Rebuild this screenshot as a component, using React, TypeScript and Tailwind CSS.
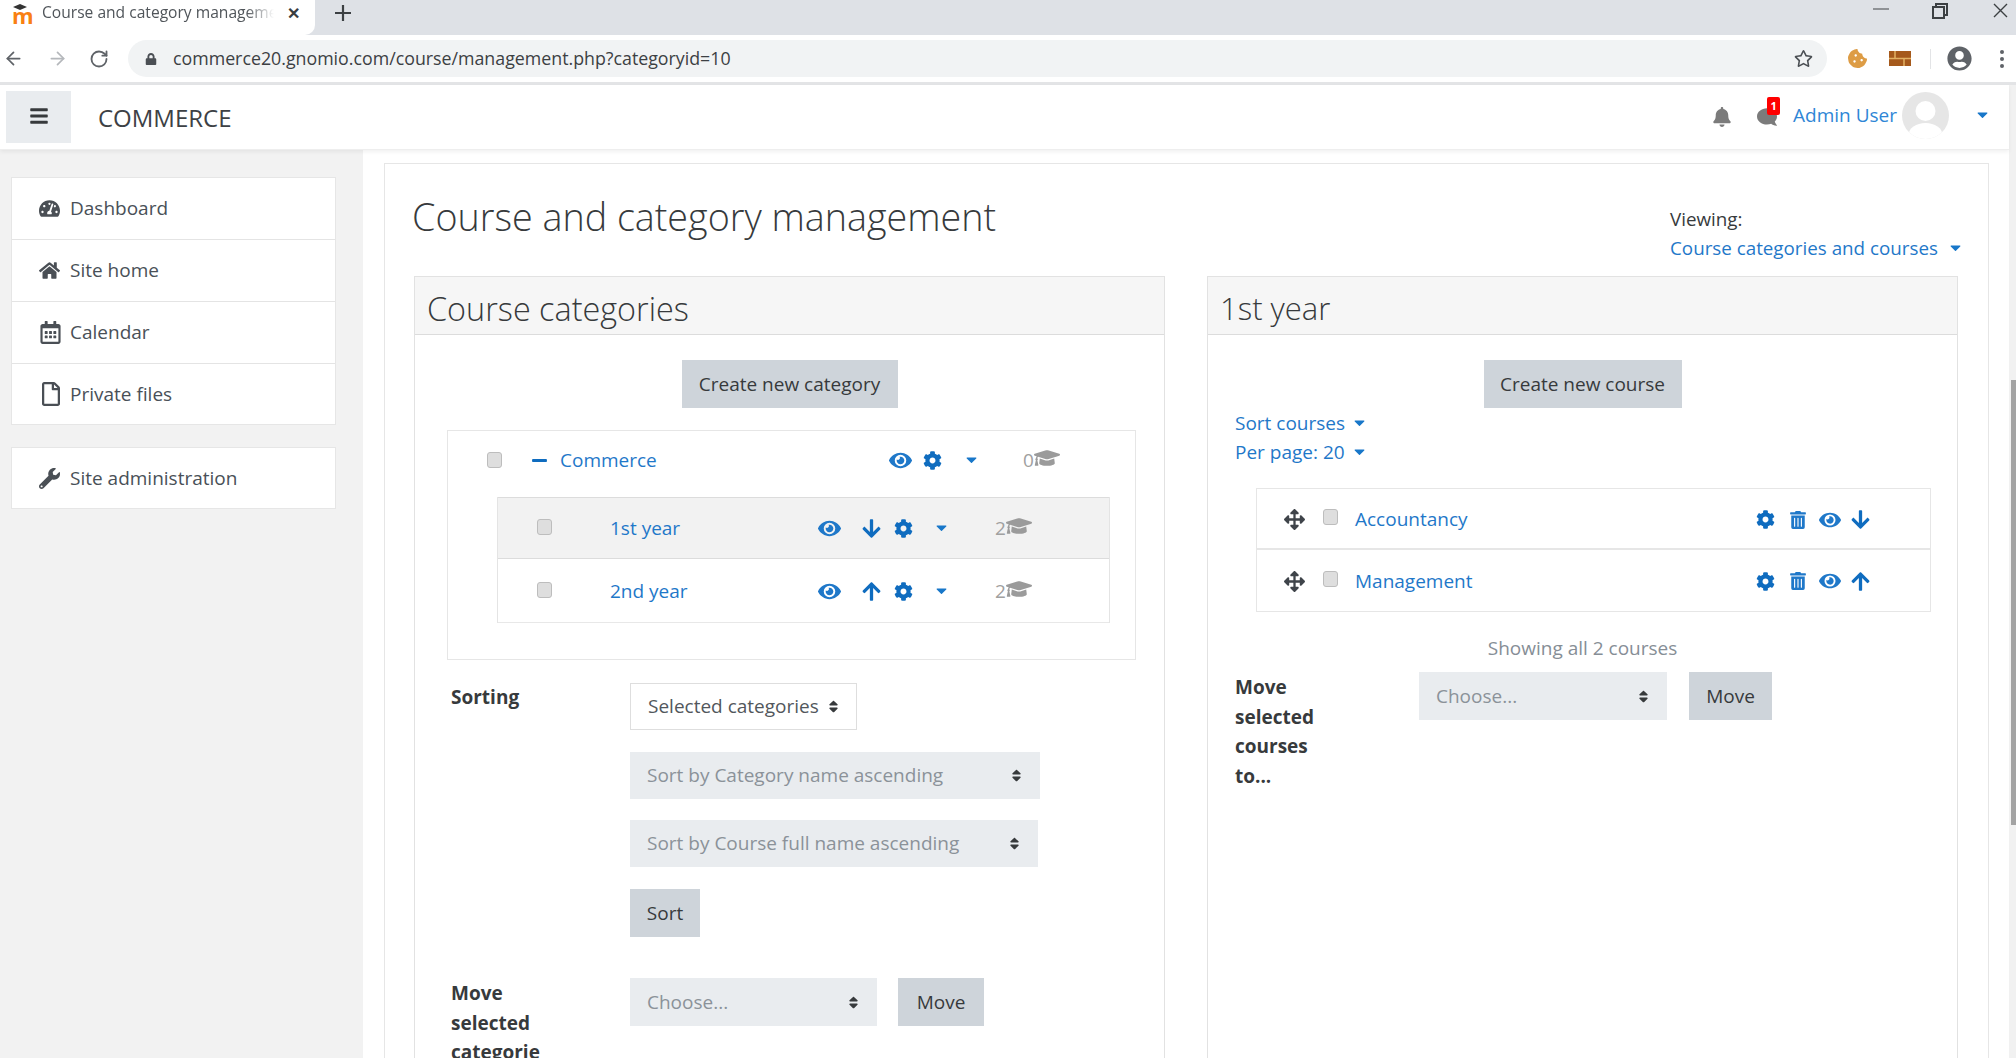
import React from "react";
import {
  FaArrowDown, FaArrowUp, FaArrowsAlt, FaBars, FaBell, FaRegCalendarAlt, FaCaretDown, FaCog,
  FaComment, FaEye, FaGraduationCap, FaHome, FaLock, FaMinus, FaRegFile, FaRegStar, FaSort, FaTachometerAlt,
  FaTrashAlt, FaUserCircle, FaWrench, FaCookieBite,
} from "react-icons/fa";
import { ArrowLeft, ArrowRight, RotateCw } from "lucide-react";

const Check = () => <span className="block w-[15px] h-[16px] rounded-[3px] border border-[#bdbdbd] bg-[#dedede] shrink-0" />;

const Caret = ({ className = "" }: { className?: string }) => <FaCaretDown className={"text-[#1877c9] text-[17px] shrink-0 " + className} />;

const Btn = ({ label, className = "" }: { label: string; className?: string }) => (
  <button className={"h-[48px] bg-[#ced4da] text-[#373a3c] text-[19px] flex items-center justify-center " + className}>{label}</button>
);

const Sel = ({ label, className = "" }: { label: string; className?: string }) => (
  <div className={"h-[47px] pl-[17px] pr-[16px] flex items-center justify-between bg-[#e9ecef] text-[#8b9299] text-[19px] " + className}>
    <span>{label}</span>
    <FaSort className="text-[#373a3c] text-[15px]" />
  </div>
);

const NavRow = ({ icon, label, className }: { icon: React.ReactNode; label: string; className: string }) => (
  <div className={"flex items-center text-[19px] text-[#495057] " + className}>
    <span className="w-[57px] pl-[27px] shrink-0 text-[21px] text-[#4a4f55]">{icon}</span>
    <span className="ml-[1px]">{label}</span>
  </div>
);

const Cap = () => <FaGraduationCap className="text-[#9b9b9b] text-[26px] -mt-[5px]" />;

const CatRow = ({ label, arrow, active }: { label: string; arrow: React.ReactNode; active?: boolean }) => (
  <div className={"flex items-center " + (active ? "h-[62px] bg-[#f2f2f2] border-y border-[#dcdcdc]" : "h-[64px] pt-[1px] border-b border-[#e8e8e8]")}>
    <span className="ml-[39px] -mt-[3px]"><Check /></span>
    <a className="ml-[58px] w-[208px] text-[19px] text-[#1f78c9]">{label}</a>
    <FaEye className="text-[#1f78c9] text-[23px] shrink-0" />
    <span className="ml-[20px] w-[20px] text-[#0f6cbf] text-[21px] shrink-0 flex justify-center"><span>{arrow}</span></span>
    <FaCog className="ml-[13px] text-[#0f6cbf] text-[19px] shrink-0" />
    <Caret className="ml-[20px] -mt-[2px]" />
    <span className="ml-[45px] text-[19px] text-[#a0a0a0]">2</span>
    <Cap />
  </div>
);

const CourseRow = ({ label, arrow, first }: { label: string; arrow: React.ReactNode; first?: boolean }) => (
  <div className={"h-[61px] flex items-center " + (first ? "pt-[2px] border-b-2 border-[#e6e6e6]" : "pt-[1px]")}>
    <FaArrowsAlt className="ml-[27px] text-[21px] text-[#3f444a] shrink-0" />
    <span className="ml-[18px] -mt-[5px]"><Check /></span>
    <a className="ml-[17px] w-[401px] text-[19px] text-[#1f78c9]">{label}</a>
    <FaCog className="text-[#0f6cbf] text-[19px] shrink-0" />
    <FaTrashAlt className="ml-[14px] text-[#1f78c9] text-[18px] shrink-0" />
    <FaEye className="ml-[12px] text-[#1f78c9] text-[22px] shrink-0" />
    <span className="ml-[9px] text-[#0f6cbf] text-[21px]">{arrow}</span>
  </div>
);

export default function App() {
  return (
    <div className="w-[2016px] h-[1058px] overflow-hidden flex flex-col bg-white font-['Open_Sans',sans-serif]">
      {/* tab strip */}
      <div className="h-[35px] bg-[#dee1e6] flex items-center shrink-0">
        <div className="w-[315px] h-[35px] bg-white rounded-br-[10px] flex items-center pl-[12px] pb-[9px]">
          <span className="relative w-[20px] h-[26px] shrink-0">
            <span className="block text-[22px] leading-[30px] font-bold text-[#f98012]">m</span>
            <svg className="absolute left-[1px] top-[4px]" width="14" height="8" viewBox="0 0 14 8"><path d="M0 3 L7 0 L14 3 L7 6Z" fill="#333" /></svg>
          </span>
          <span className="ml-[10px] w-[232px] overflow-hidden whitespace-nowrap text-[15.6px] text-[#50555a] [mask-image:linear-gradient(to_right,black_88%,transparent)]">Course and category management</span>
          <span className="ml-[13px] text-[16px] font-bold text-[#3a3d40] leading-none">✕</span>
        </div>
        <svg className="ml-[20px] -mt-[10px]" width="16" height="16" viewBox="0 0 16 16"><path d="M8 0V16M0 8H16" stroke="#3c4043" strokeWidth="2.2" /></svg>
        <div className="flex-1" />
        <div className="flex items-center h-[35px] -mt-[14px]">
          <svg className="-mt-[4px]" width="16" height="2" viewBox="0 0 16 2"><rect width="16" height="2" fill="#8f9296" /></svg>
          <svg className="ml-[43px]" width="16" height="16" viewBox="0 0 16 16"><path d="M1 4H12V15H1Z M4 4V1H15V12H12" fill="none" stroke="#3c4043" strokeWidth="2" /></svg>
          <svg className="ml-[45px] mr-[8px]" width="15" height="15" viewBox="0 0 15 15"><path d="M1 1L14 14M14 1L1 14" stroke="#3c4043" strokeWidth="1.4" /></svg>
        </div>
      </div>
      {/* toolbar */}
      <div className="h-[47px] shrink-0 flex items-center bg-white text-[#5f6368]">
        <ArrowLeft className="ml-[3px] shrink-0" size={21} strokeWidth={2} />
        <ArrowRight className="ml-[23px] shrink-0 text-[#b5b8bc]" size={21} strokeWidth={2} />
        <RotateCw className="ml-[21px] shrink-0" size={20} strokeWidth={2.2} />
        <div className="ml-[19px] w-[1699px] h-[37px] rounded-full bg-[#f1f3f4] flex items-center pl-[17px]">
          <FaLock className="text-[12px] text-[#4b4f54]" />
          <span className="ml-[16px] text-[17.8px] text-[#3c4043]">commerce20.gnomio.com/course/management.php?categoryid=10</span>
          <div className="flex-1" />
          <FaRegStar className="mr-[14px] text-[19px] text-[#4b4f54]" />
        </div>
        <FaCookieBite className="ml-[21px] text-[19px] text-[#dd9c45] shrink-0" />
        <svg className="ml-[22px] shrink-0" width="22" height="15" viewBox="0 0 22 15">
          <rect width="22" height="15" fill="#a5591c" />
          <path d="M0 7.5H22M6 0V7.5M15 7.5V15" stroke="#e2b163" strokeWidth="1.5" />
        </svg>
        <span className="ml-[19px] w-px h-[20px] bg-[#e3e4e6] shrink-0" />
        <FaUserCircle className="ml-[16px] text-[25px] text-[#5f6368] shrink-0" />
        <span className="ml-[28px] flex flex-col gap-[3px] shrink-0">
          <span className="w-[4px] h-[4px] rounded-full bg-[#5f6368]" />
          <span className="w-[4px] h-[4px] rounded-full bg-[#5f6368]" />
          <span className="w-[4px] h-[4px] rounded-full bg-[#5f6368]" />
        </span>
      </div>
      <div className="h-[3px] shrink-0 bg-[#e3e4e6]" />
      <div className="flex-1 flex min-h-0">
        <div className="flex-1 flex flex-col min-w-0">
          {/* page header */}
          <header className="h-[65px] shrink-0 bg-white flex items-center border-b border-[#eeeeee] shadow-[0_2px_4px_rgba(0,0,0,0.06)] relative z-10">
            <div className="ml-[6px] w-[65px] h-[52px] bg-[#e9ecef] flex items-center justify-center">
              <FaBars className="text-[#373a3c] text-[20px] -mt-[2px]" />
            </div>
            <span className="ml-[27px] mt-[2px] text-[24px] text-[#3d4145]">COMMERCE</span>
            <div className="flex-1" />
            <FaBell className="text-[#7b7b7b] text-[20px]" />
            <span className="ml-[25px] relative">
              <FaComment className="text-[#7b7b7b] text-[20px] -scale-x-100" />
              <span className="absolute left-[10px] -top-[10px] w-[13px] h-[18px] bg-[#f00] rounded-[2px] text-white text-[11px] font-bold leading-[18px] text-center">1</span>
            </span>
            <span className="ml-[16px] -mt-[3px] text-[19px] text-[#2f86d6]">Admin User</span>
            <svg className="ml-[5px] -mt-[3px]" width="47" height="47" viewBox="0 0 47 47">
              <defs><clipPath id="av"><circle cx="23.5" cy="23.5" r="23.5" /></clipPath></defs>
              <g clipPath="url(#av)">
                <rect width="47" height="47" fill="#e6e6e6" />
                <circle cx="23.5" cy="19" r="10" fill="#fff" />
                <ellipse cx="23.5" cy="43" rx="17" ry="12" fill="#fff" />
              </g>
            </svg>
            <Caret className="ml-[25px] mr-[18px] -mt-[5px]" />
          </header>
          <div className="flex-1 flex min-h-0">
            {/* sidebar */}
            <aside className="w-[363px] shrink-0 bg-[#f2f2f2] pt-[27px] pl-[11px] pr-[27px]">
              <div className="bg-white border border-[#e6e6e6]">
                <NavRow icon={<FaTachometerAlt />} label="Dashboard" className="h-[62px] border-b border-[#e4e4e4]" />
                <NavRow icon={<FaHome />} label="Site home" className="h-[62px] border-b border-[#e4e4e4]" />
                <NavRow icon={<FaRegCalendarAlt className="text-[23px]" />} label="Calendar" className="h-[62px] border-b border-[#e4e4e4]" />
                <NavRow icon={<FaRegFile className="text-[24px]" />} label="Private files" className="h-[60px]" />
              </div>
              <div className="mt-[22px] bg-white border border-[#e6e6e6]">
                <NavRow icon={<FaWrench />} label="Site administration" className="h-[60px]" />
              </div>
            </aside>
            {/* main */}
            <main className="flex-1 pl-[21px] pt-[13px] pr-[20px] min-w-0">
              <div className="h-[1000px] border-l border-t border-r border-[#e6e6e6] pl-[29px] pr-[28px]">
                <div className="h-[112px] flex justify-between">
                  <h1 className="mt-[27px] -ml-[2px] text-[37.7px] leading-[52px] font-light text-[#373a3c] whitespace-nowrap">Course and category management</h1>
                  <div className="mt-[41px] w-[294px] -mr-[4px] text-[18.8px] leading-[29px] whitespace-nowrap">
                    <div className="text-[#373a3c]">Viewing:</div>
                    <div className="flex items-center justify-between text-[#1f78c9]">Course categories and courses<Caret className="-mt-[2px]" /></div>
                  </div>
                </div>
                <div className="flex gap-[42px]">
                  {/* categories */}
                  <section className="w-[751px] shrink-0 h-[900px] border border-[#e2e2e2]">
                    <div className="h-[58px] pt-[5px] bg-[#f6f6f6] border-b border-[#dcdcdc] pl-[12px] flex items-center text-[32.4px] font-light text-[#373a3c]">Course categories</div>
                    <div className="pt-[25px] flex justify-center">
                      <Btn label="Create new category" className="w-[216px]" />
                    </div>
                    <div className="mt-[22px] ml-[32px] w-[689px] h-[230px] border border-[#e6e6e6]">
                      <div className="h-[66px] pb-[7px] flex items-center">
                        <span className="ml-[39px] -mt-[1px]"><Check /></span>
                        <FaMinus className="ml-[29px] text-[#0f6cbf] text-[17px]" />
                        <a className="ml-[12px] w-[329px] text-[19px] text-[#1f78c9]">Commerce</a>
                        <FaEye className="text-[#1f78c9] text-[23px] shrink-0" />
                        <FaCog className="ml-[11px] text-[#0f6cbf] text-[19px] shrink-0" />
                        <Caret className="ml-[21px] -mt-[2px]" />
                        <span className="ml-[43px] text-[19px] text-[#a0a0a0]">0</span>
                        <Cap />
                      </div>
                      <div className="ml-[49px] w-[613px] border-x border-[#e4e4e4]">
                        <CatRow label="1st year" arrow={<FaArrowDown />} active />
                        <CatRow label="2nd year" arrow={<FaArrowUp />} />
                      </div>
                    </div>
                    <div className="mt-[23px] grid grid-cols-[179px_1fr] pl-[36px]">
                      <div className="text-[19px] font-bold text-[#373a3c] leading-[29px]">Sorting</div>
                      <div className="flex flex-col items-start">
                        <div className="w-[227px] h-[47px] pl-[17px] pr-[15px] flex items-center justify-between bg-white border border-[#dedede] text-[#52575c] text-[19px]">
                          <span className="whitespace-nowrap">Selected categories</span>
                          <FaSort className="text-[#373a3c] text-[15px] shrink-0" />
                        </div>
                        <Sel label="Sort by Category name ascending" className="mt-[22px] w-[410px]" />
                        <Sel label="Sort by Course full name ascending" className="mt-[21px] w-[408px]" />
                        <Btn label="Sort" className="mt-[22px] w-[70px]" />
                      </div>
                      <div className="mt-[42px] h-[95px] overflow-hidden text-[19px] font-bold text-[#373a3c] leading-[29.5px] w-[100px]">
                        Move selected categorie
                      </div>
                      <div className="-mt-[1px] pt-[42px] flex items-start">
                        <Sel label="Choose..." className="w-[247px] h-[48px]" />
                        <Btn label="Move" className="ml-[21px] w-[86px]" />
                      </div>
                    </div>
                  </section>
                  {/* courses */}
                  <section className="w-[751px] shrink-0 h-[900px] border border-[#e2e2e2]">
                    <div className="h-[58px] pt-[5px] bg-[#f6f6f6] border-b border-[#dcdcdc] pl-[12px] flex items-center text-[31px] font-light text-[#373a3c]">1st year</div>
                    <div className="pt-[25px] flex justify-center">
                      <Btn label="Create new course" className="w-[198px]" />
                    </div>
                    <div className="ml-[27px] mt-[1px] text-[19px] leading-[29px] text-[#1f78c9]">
                      <div className="flex items-center gap-[6px]">Sort courses<Caret className="-mt-[2px]" /></div>
                      <div className="flex items-center gap-[6px]">Per page: 20<Caret className="-mt-[2px]" /></div>
                    </div>
                    <div className="mt-[21px] ml-[48px] w-[675px] border border-[#e6e6e6]">
                      <CourseRow label="Accountancy" arrow={<FaArrowDown />} first />
                      <CourseRow label="Management" arrow={<FaArrowUp />} />
                    </div>
                    <div className="mt-[22px] text-center text-[19px] leading-[29px] text-[#868e96]">Showing all 2 courses</div>
                    <div className="mt-[9px] grid grid-cols-[184px_1fr] pl-[27px]">
                      <div className="pt-[1px] text-[19px] font-bold text-[#373a3c] leading-[29.5px] w-[100px]">Move selected courses to...</div>
                      <div className="flex items-start">
                        <Sel label="Choose..." className="w-[248px] h-[48px]" />
                        <Btn label="Move" className="ml-[22px] w-[83px]" />
                      </div>
                    </div>
                  </section>
                </div>
              </div>
            </main>
          </div>
        </div>
        {/* scrollbar */}
        <div className="w-[7px] shrink-0 bg-[#f1f1f1] pl-[2px] flex flex-col">
          <div className="h-[295px]" />
          <div className="h-[445px] bg-[#a3a3a3]" />
        </div>
      </div>
    </div>
  );
}
